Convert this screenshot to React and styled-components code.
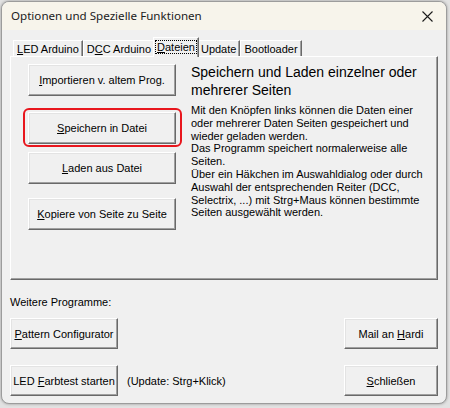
import React from 'react';
import styled, { createGlobalStyle, css } from 'styled-components';

const GlobalStyle = createGlobalStyle`
  html, body {
    margin: 0;
    padding: 0;
    background: #e2e2e2;
  }
  body {
    width: 450px;
    height: 408px;
    overflow: hidden;
    font-family: "Liberation Sans", Arial, sans-serif;
  }
`;

const Window = styled.div`
  box-sizing: border-box;
  width: 446px;
  height: 403px;
  margin: 1px 0 0 1px;
  border: 1px solid #9c9c9c;
  border-radius: 8px;
  overflow: hidden;
  background: #f0f0f0;
  box-shadow: 0 0 3px rgba(0, 0, 0, 0.35);
  display: flex;
  flex-direction: column;
`;

const TitleBar = styled.div`
  height: 28px;
  flex: none;
  background: #f7f4eb;
  display: flex;
  align-items: center;
  padding: 0 10px 0 9px;
  font-family: "Noto Sans", "Liberation Sans", sans-serif;
  font-size: 11.6px;
  color: #1b1b1b;
`;

const Title = styled.div`
  flex: 1;
  padding-bottom: 1px;
`;

const CloseButton = styled.div`
  width: 12px;
  height: 12px;
  display: flex;
  align-items: center;
  justify-content: center;
  margin-right: 3px;
`;

const Body = styled.div`
  flex: 1;
  padding: 0 8px 0 8px;
  font-size: 11px;
  color: #000;
`;

const TabStrip = styled.div`
  display: flex;
  align-items: flex-end;
  height: 19px;
  margin-top: 7px;
  padding-left: 3px;
`;

const Tab = styled.div`
  position: relative;
  box-sizing: border-box;
  height: 16px;
  padding: 0 3px 0 3px;
  display: flex;
  align-items: center;
  white-space: nowrap;
  background: #f0f0f0;
  border-top: 1px solid #ffffff;
  border-left: 1px solid #ffffff;
  border-right: 1px solid #696969;
  box-shadow: inset -1px 0 #a0a0a0;
  ${p => p.$active && css`
    height: 20px;
    margin: 0 -2px -1px -2px;
    padding: 0 2px 1px 2px;
    z-index: 1;
  `}
`;

const Focus = styled.span`
  outline: 1px dotted #000;
  outline-offset: 0;
  padding: 0 1px;
  line-height: 12px;
`;

const Key = styled.u`
  text-decoration: underline;
  text-underline-offset: 1px;
`;

const Panel = styled.div`
  box-sizing: border-box;
  height: 224px;
  display: flex;
  border: 1px solid;
  border-color: #ffffff #696969 #696969 #ffffff;
  box-shadow: inset -1px -1px #a0a0a0;
`;

const ButtonColumn = styled.div`
  display: flex;
  flex-direction: column;
  padding-left: 17px;
  flex: none;
`;

const Button = styled.div`
  position: relative;
  box-sizing: border-box;
  width: ${p => p.$width}px;
  height: ${p => p.$height || 32}px;
  margin-top: ${p => p.$top || 0}px;
  display: flex;
  align-items: center;
  justify-content: center;
  white-space: nowrap;
  font-size: 11px;
  background: #f0f0f0;
  border: 1px solid;
  border-color: #ffffff #696969 #696969 #ffffff;
  box-shadow: inset -1px -1px #a0a0a0, inset 1px 1px #e3e3e3;
  ${p => p.$marked && css`
    &::after {
      content: '';
      position: absolute;
      left: -6px;
      top: -5px;
      right: -7px;
      bottom: -4px;
      border: 2px solid #e8161d;
      border-radius: 6px;
    }
  `}
`;

const InfoColumn = styled.div`
  padding: 7px 0 0 15px;
`;

const Heading = styled.div`
  font-size: 14px;
  line-height: 17.5px;
  white-space: nowrap;
`;

const InfoText = styled.div`
  margin-top: 5px;
  font-size: 11px;
  line-height: 12.8px;
  white-space: nowrap;
`;

const Section = styled.div`
  margin-top: 16px;
  font-size: 11px;
  line-height: 13px;
`;

const ButtonRow = styled.div`
  display: flex;
  align-items: center;
  margin-top: ${p => p.$top}px;
`;

const Hint = styled.span`
  margin-left: 9px;
  flex: 1;
`;

const infoLines = [
  'Mit den Knöpfen links können die Daten einer',
  'oder mehrerer Daten Seiten gespeichert und',
  'wieder geladen werden.',
  'Das Programm speichert normalerweise alle',
  'Seiten.',
  'Über ein Häkchen im Auswahldialog oder durch',
  'Auswahl der entsprechenden Reiter (DCC,',
  'Selectrix, ...) mit Strg+Maus können bestimmte',
  'Seiten ausgewählt werden.',
];

export default function App() {
  return (
    <>
      <GlobalStyle />
      <Window>
        <TitleBar>
          <Title>Optionen und Spezielle Funktionen</Title>
          <CloseButton>
            <svg width="11" height="11" viewBox="0 0 11 11">
              <path d="M0.5 0.5 L10.5 10.5 M10.5 0.5 L0.5 10.5" stroke="#1b1b1b" strokeWidth="1.1" fill="none" />
            </svg>
          </CloseButton>
        </TitleBar>
        <Body>
          <TabStrip>
            <Tab><span><Key>L</Key>ED Arduino</span></Tab>
            <Tab><span>D<Key>C</Key>C Arduino</span></Tab>
            <Tab $active><Focus><Key>D</Key>ateien</Focus></Tab>
            <Tab><span>Update</span></Tab>
            <Tab><span>Bootloader</span></Tab>
          </TabStrip>
          <Panel>
            <ButtonColumn>
              <Button $width={148} $top={7}><span><Key>I</Key>mportieren v. altem Prog.</span></Button>
              <Button $width={148} $top={16} $marked><span><Key>S</Key>peichern in Datei</span></Button>
              <Button $width={148} $top={8}><span><Key>L</Key>aden aus Datei</span></Button>
              <Button $width={148} $top={14}><span><Key>K</Key>opiere von Seite zu Seite</span></Button>
            </ButtonColumn>
            <InfoColumn>
              <Heading>
                Speichern und Laden einzelner oder<br />
                mehrerer Seiten
              </Heading>
              <InfoText>
                {infoLines.map((line, i) => (
                  <div key={i}>{line}</div>
                ))}
              </InfoText>
            </InfoColumn>
          </Panel>
          <Section>Weitere Programme:</Section>
          <ButtonRow $top={9}>
            <Button $width={108} $height={31}><span><Key>P</Key>attern Configurator</span></Button>
            <Hint />
            <Button $width={94} $height={31}><span>Mail an <Key>H</Key>ardi</span></Button>
          </ButtonRow>
          <ButtonRow $top={16}>
            <Button $width={108} $height={31}><span>LED <Key>F</Key>arbtest starten</span></Button>
            <Hint>(Update: Strg+Klick)</Hint>
            <Button $width={94} $height={31}><span><Key>S</Key>chließen</span></Button>
          </ButtonRow>
        </Body>
      </Window>
    </>
  );
}
